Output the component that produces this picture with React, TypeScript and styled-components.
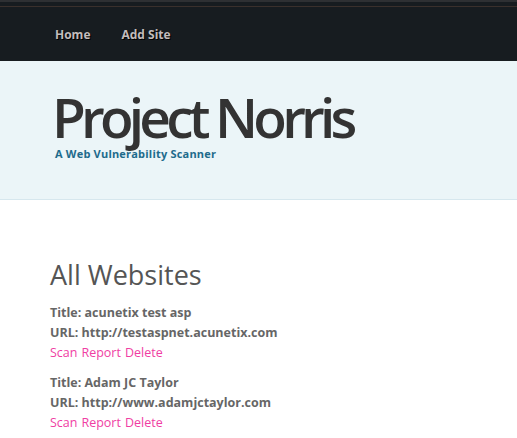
import React from 'react';
import styled, { createGlobalStyle } from 'styled-components';

const sites = [
	{ title: 'acunetix test asp', url: 'http://testaspnet.acunetix.com' },
	{ title: 'Adam JC Taylor', url: 'http://www.adamjctaylor.com' },
];

const GlobalStyle = createGlobalStyle`
	body {
		margin: 0;
		background: #fff;
		font-family: 'Open Sans', 'DejaVu Sans', sans-serif;
	}
`;

const TopBar = styled.nav`
	height: 61px;
	background: #171c20;
	border-top: 2px solid #2e3033;
	box-sizing: border-box;
	display: flex;
	flex-direction: column;

	&::before {
		content: '';
		display: block;
		height: 1px;
		margin-top: 4px;
		background: #3a302c;
	}
`;

const NavList = styled.ul`
	list-style: none;
	margin: 0;
	padding: 0 0 0 55px;
	display: flex;
	gap: 31px;
	flex: 1;
	align-items: center;
`;

const NavLink = styled.li`
	font-size: 12px;
	font-weight: 700;
	color: #c3bcbc;
	text-shadow: 1px 1px 0 #000;
	cursor: pointer;
`;

const Header = styled.header`
	height: 139px;
	background: #ebf5f8;
	border-bottom: 1px solid #d6e7ee;
	padding: 28px 0 0 52px;
	box-sizing: border-box;
`;

const Brand = styled.h1`
	margin: 0;
	font-size: 55px;
	font-weight: 600;
	letter-spacing: -4.8px;
	line-height: 56px;
	color: #333;
`;

const Tagline = styled.div`
	margin: 1px 0 0 3px;
	font-size: 11px;
	font-weight: 700;
	color: #1e6b8c;
	letter-spacing: 0.2px;
`;

const Main = styled.main`
	padding: 59px 50px 0;
`;

const Heading = styled.h2`
	margin: 0 0 12px;
	font-size: 27px;
	font-weight: 400;
	color: #555;
	line-height: 32px;
`;

const Site = styled.div`
	margin-bottom: 10px;
`;

const Field = styled.div`
	font-size: 12.5px;
	font-weight: 700;
	color: #666;
	line-height: 20px;
`;

const Actions = styled.div`
	display: flex;
	gap: 4px;
	font-size: 12.5px;
	line-height: 20px;
`;

const Action = styled.a`
	color: #f03ea3;
	text-decoration: none;
	cursor: pointer;
`;

export default function App() {
	return (
		<>
			<GlobalStyle />
			<TopBar>
				<NavList>
					<NavLink>Home</NavLink>
					<NavLink>Add Site</NavLink>
				</NavList>
			</TopBar>
			<Header>
				<Brand>Project Norris</Brand>
				<Tagline>A Web Vulnerability Scanner</Tagline>
			</Header>
			<Main>
				<Heading>All Websites</Heading>
				{sites.map(site => (
					<Site key={site.url}>
						<Field>Title: {site.title}</Field>
						<Field>URL: {site.url}</Field>
						<Actions>
							<Action>Scan</Action>
							<Action>Report</Action>
							<Action>Delete</Action>
						</Actions>
					</Site>
				))}
			</Main>
		</>
	);
}
